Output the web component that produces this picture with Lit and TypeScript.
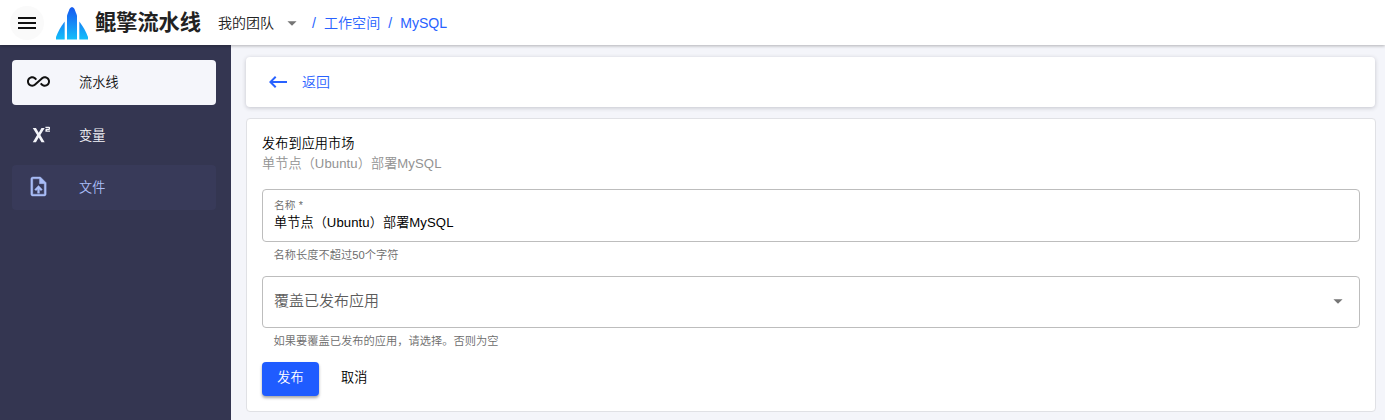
import { LitElement, html, css, svg } from "lit";
import { customElement, property } from "lit/decorators.js";

const icons: Record<string, string> = {
  menu: "M3 18h18v-2H3v2zm0-5h18v-2H3v2zm0-7v2h18V6H3z",
  down: "M7 10l5 5 5-5z",
  back: "M21 11H6.83l3.58-3.59L9 6l-6 6 6 6 1.41-1.41L6.83 13H21z",
  infinity:
    "M18.6 6.62c-1.44 0-2.8.56-3.77 1.53L7.8 14.39c-.64.64-1.49.99-2.4.99-1.87 0-3.39-1.51-3.39-3.38S3.53 8.62 5.4 8.62c.91 0 1.76.35 2.44 1.03l1.13 1 1.51-1.34L9.22 8.2C8.2 7.18 6.84 6.62 5.4 6.62 2.42 6.62 0 9.04 0 12s2.42 5.38 5.4 5.38c1.44 0 2.8-.56 3.77-1.53l7.03-6.24c.64-.64 1.49-.99 2.4-.99 1.87 0 3.39 1.51 3.39 3.38s-1.52 3.38-3.39 3.38c-.9 0-1.76-.35-2.44-1.03l-1.14-1.01-1.51 1.34 1.27 1.12c1.02 1.01 2.37 1.57 3.82 1.57 2.98 0 5.4-2.41 5.4-5.38s-2.42-5.37-5.4-5.37z",
  superscript:
    "M5.200 5.500h3.500l3 5.200 3-5.200h3.500L13.500 13.200 18.200 21h-3.500l-3-5.300-3 5.300H5.200l4.700-7.800z M24 7.500h-3.200v.7H24v1.300h-5V7.600c0-.7.5-1.200 1.100-1.200h2.500V5.400H19V4h4c.6 0 1 .4 1 1v1.500c0 .6-.4 1-1 1z",
  upload:
    "M14 2H6c-1.1 0-1.99.9-1.99 2L4 20c0 1.1.89 2 1.99 2H18c1.1 0 2-.9 2-2V8l-6-6zm4 18H6V4h7v5h5v11zM8 15.01l1.41 1.41L11 14.84V19h2v-4.16l1.59 1.59L16 15.01 12.01 11z",
};

const icon = (name: string, size: number) => svg`
  <svg width=${size} height=${size} viewBox="0 0 24 24" fill="currentColor" aria-hidden="true"><path d=${icons[name]}></path></svg>`;

@customElement("side-item")
class SideItem extends LitElement {
  @property() icon = "";
  @property() label = "";
  @property({ type: Number }) size = 22;

  static styles = css`
    :host {
      box-sizing: border-box;
      display: flex;
      align-items: center;
      height: 45px;
      padding-bottom: 2px;
      border-radius: 4px;
      color: #f4f5fa;
      font-size: 13.1px;
      letter-spacing: 0.2px;
    }
    :host([active]) {
      background: #f5f6fb;
      color: #111;
    }
    :host([hovered]) {
      background: #383a59;
      color: #a9bdf7;
    }
    .icon {
      display: flex;
      justify-content: center;
      width: 53px;
      margin-right: 14px;
    }
    svg {
      display: block;
    }
    :host([hovered]) path {
      stroke: currentColor;
      stroke-width: 0.4;
    }
  `;

  render() {
    return html`<span class="icon">${icon(this.icon, this.size)}</span><span>${this.label}</span>`;
  }
}

@customElement("app-root")
class AppRoot extends LitElement {
  static styles = css`
    :host {
      display: flex;
      flex-direction: column;
      height: 420px;
      overflow: hidden;
      background: #f4f5fa;
      font-family: "Liberation Sans", "Noto Sans CJK SC", sans-serif;
      font-size: 13.125px;
      font-weight: 350;
      color: #000;
    }
    * {
      box-sizing: border-box;
    }
    svg {
      display: block;
    }
    header {
      display: flex;
      align-items: center;
      flex: none;
      height: 45px;
      background: #fff;
      box-shadow: 0 1px 3px rgba(0, 0, 0, 0.28);
      z-index: 1;
    }
    .menu {
      display: grid;
      place-items: center;
      width: 34px;
      height: 34px;
      margin-left: 10px;
      border-radius: 50%;
      background: #fafafa;
      color: #111;
    }
    .logo {
      margin: 1px 0 0 12px;
    }
    .brand {
      margin-left: 7px;
      font-size: 21.2px;
      font-weight: 700;
      line-height: 45px;
      color: #222;
      white-space: nowrap;
    }
    .team {
      display: flex;
      align-items: center;
      height: 44px;
      margin-left: 17px;
      font-size: 14px;
      line-height: 20px;
      color: #222;
    }
    .team svg {
      margin-left: 7px;
      color: #757575;
    }
    .crumbs {
      display: flex;
      align-items: baseline;
      gap: 8px;
      margin-left: 9px;
      padding-bottom: 2px;
      font-size: 14.1px;
      color: #2962ff;
    }
    .body {
      display: flex;
      flex: 1;
      min-height: 0;
    }
    nav {
      display: flex;
      flex-direction: column;
      gap: 7.5px;
      width: 231px;
      padding: 15px 15px 0 12px;
      background: #343651;
    }
    main {
      display: flex;
      flex-direction: column;
      gap: 11px;
      flex: 1;
      padding: 12px 9px 0 15px;
    }
    .bar {
      display: flex;
      align-items: center;
      height: 50px;
      margin-right: 1px;
      padding: 0 0 1px 20px;
      border-radius: 4px;
      background: #fff;
      box-shadow: 0 1px 4px rgba(40, 40, 60, 0.24);
      color: #2962ff;
      font-size: 14px;
    }
    .bar span {
      margin-left: 12px;
      padding-bottom: 2px;
    }
    .card {
      height: 294px;
      padding: 15px 15px 0;
      border: 1px solid #e0e1e5;
      border-radius: 4px;
      background: #fff;
    }
    .title,
    .subtitle {
      line-height: 20px;
      letter-spacing: 0.1px;
    }
    .subtitle {
      color: #929292;
    }
    .field {
      display: flex;
      flex-direction: column;
      height: 53px;
      margin-top: 15px;
      padding: 7px 11px;
      border: 1px solid #bdbdbd;
      border-radius: 4px;
    }
    .label {
      font-size: 10.7px;
      line-height: 16px;
      letter-spacing: 0.15px;
      color: #6c6c6c;
    }
    .value {
      line-height: 20px;
      letter-spacing: 0.1px;
    }
    .select {
      flex-direction: row;
      align-items: center;
      justify-content: space-between;
      height: 52px;
      margin-top: 13px;
      padding: 6px 10px 8px 11px;
      font-size: 15px;
      color: #5c5c5c;
    }
    .select span {
      padding-bottom: 3px;
    }
    .select svg {
      color: #757575;
    }
    .hint {
      margin-left: 11.5px;
      padding-top: 5px;
      font-size: 11.25px;
      line-height: 16px;
      color: #6c6c6c;
    }
    .actions {
      display: flex;
      margin-top: 13px;
    }
    button {
      height: 34px;
      padding: 0 15px 5px;
      border: 0;
      border-radius: 4px;
      background: none;
      font: inherit;
      letter-spacing: 0.2px;
      color: #000;
    }
    .primary {
      width: 57px;
      margin-right: 7px;
      background: #1f5cff;
      color: #fff;
      box-shadow: 0 2px 3px rgba(0, 0, 0, 0.35);
    }
  `;

  render() {
    return html`
      <header>
        <div class="menu">${icon("menu", 24)}</div>
        <svg class="logo" width="32" height="33" viewBox="0 0 32 33" aria-hidden="true">
          <defs>
            <linearGradient id="fin" gradientUnits="userSpaceOnUse" x1="0" y1="0" x2="0" y2="33">
              <stop offset="0" stop-color="#1558ef"></stop>
              <stop offset="0.45" stop-color="#1685f5"></stop>
              <stop offset="1" stop-color="#12c0fa"></stop>
            </linearGradient>
          </defs>
          <g fill="url(#fin)">
            <path d="M16 0C14.500.5 13.700 1.500 13.300 2.500L11 8.500V32.500H21V8.500L18.700 2.500C18.300 1.500 17.500.5 16 0z"></path>
            <path d="M8.700 14.500V32.500H0V30C2 24.500 5 19.500 8.700 14.500z"></path>
            <path d="M23.300 14.500V32.500H32V30C30 24.500 27 19.500 23.300 14.500z"></path>
          </g>
        </svg>
        <div class="brand">鲲擎流水线</div>
        <div class="team"><span>我的团队</span>${icon("down", 22)}</div>
        <div class="crumbs"><span>/</span><span>工作空间</span><span>/</span><span>MySQL</span></div>
      </header>
      <div class="body">
        <nav>
          <side-item active icon="infinity" size="23" label="流水线"></side-item>
          <side-item icon="superscript" size="22" label="变量"></side-item>
          <side-item hovered icon="upload" size="23" label="文件"></side-item>
        </nav>
        <main>
          <div class="bar">${icon("back", 24)}<span>返回</span></div>
          <section class="card">
            <div class="title">发布到应用市场</div>
            <div class="subtitle">单节点（Ubuntu）部署MySQL</div>
            <div class="field">
              <span class="label">名称 *</span>
              <span class="value">单节点（Ubuntu）部署MySQL</span>
            </div>
            <div class="hint">名称长度不超过50个字符</div>
            <div class="field select"><span>覆盖已发布应用</span>${icon("down", 22)}</div>
            <div class="hint">如果要覆盖已发布的应用，请选择。否则为空</div>
            <div class="actions">
              <button class="primary">发布</button>
              <button>取消</button>
            </div>
          </section>
        </main>
      </div>
    `;
  }
}
